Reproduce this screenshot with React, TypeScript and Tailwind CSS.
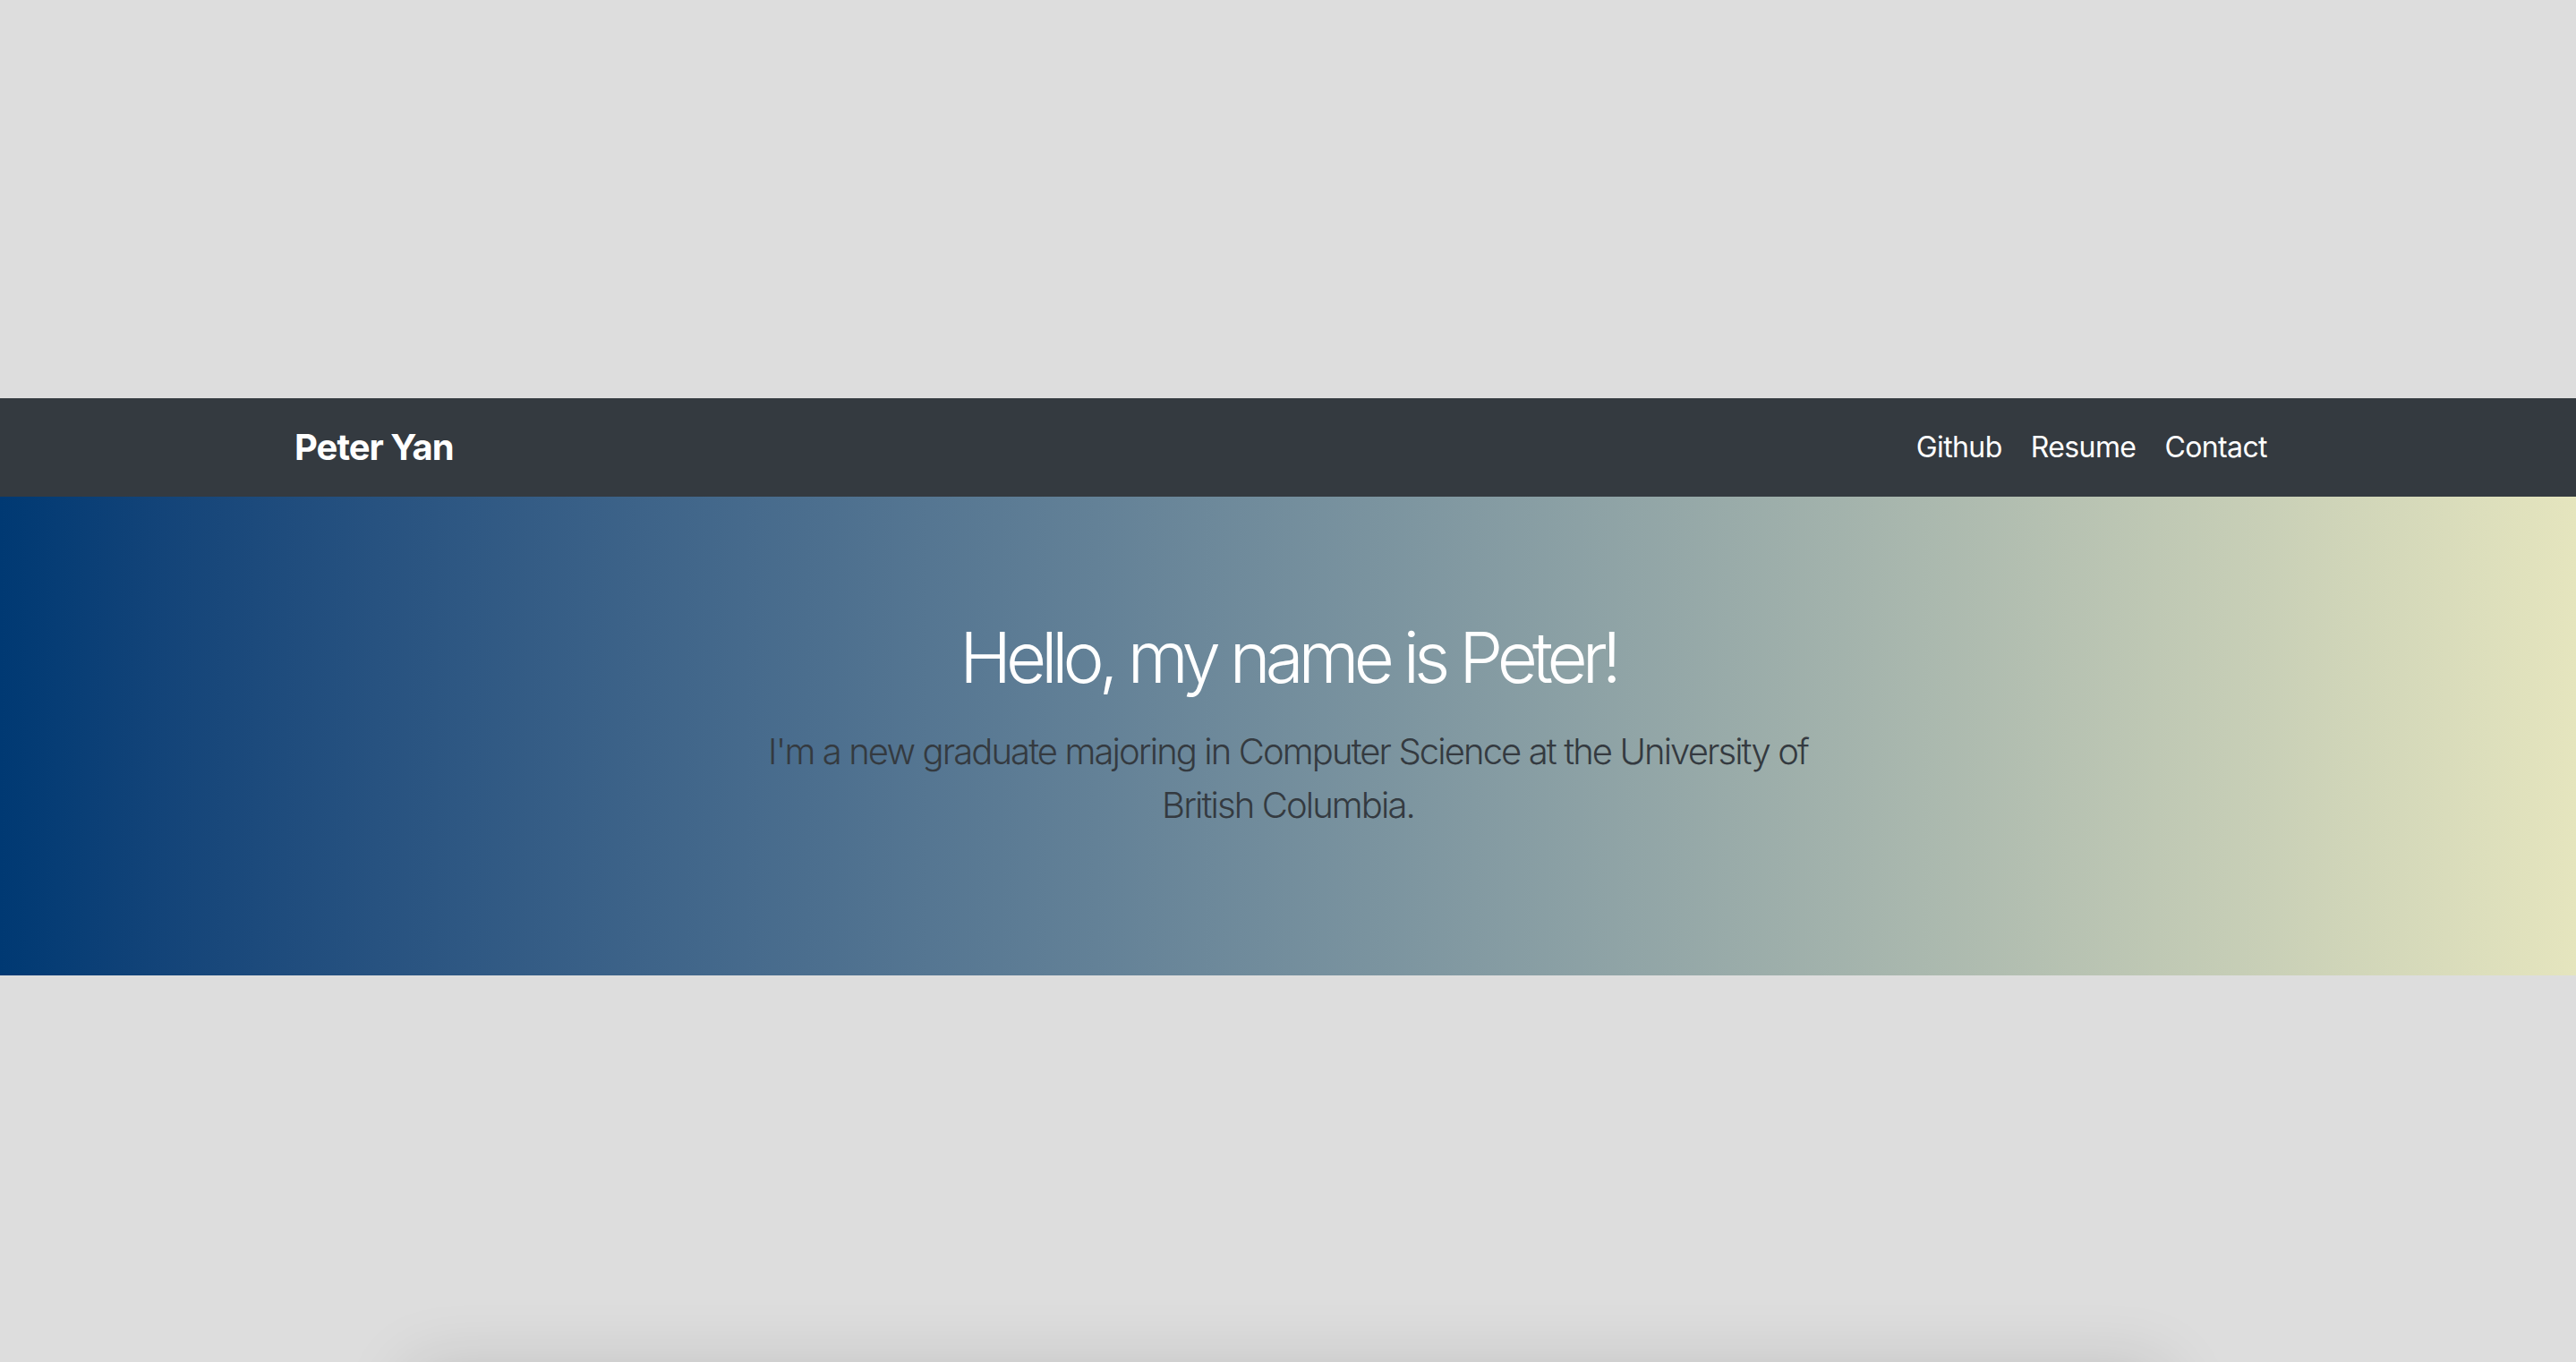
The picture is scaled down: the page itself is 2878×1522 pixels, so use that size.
const links = ["Github", "Resume", "Contact"];

const App = () => {
    return (
        <div className="min-h-screen w-full bg-[#dddddd] font-['Inter','Liberation_Sans',sans-serif] overflow-hidden">
            <div className="h-[445px]" />

            <nav className="h-[110px] bg-[#343a40]">
                <div className="mx-auto flex h-full w-[2220px] items-center justify-between">
                    <a className="text-[40px] font-bold tracking-[-1px] text-white">Peter Yan</a>
                    <ul className="flex items-center">
                        {links.map((l) => (
                            <li key={l}>
                                <a className="block px-4 text-[32px] tracking-[-0.6px] text-white">{l}</a>
                            </li>
                        ))}
                    </ul>
                </div>
            </nav>

            <section className="bg-gradient-to-r from-[#003973] to-[#e5e5be] pt-[132px] pb-[128px]">
                <div className="mx-auto flex max-w-[1240px] flex-col items-center text-center">
                    <h1 className="mb-[27px] text-[78px] leading-[96px] font-light tracking-[-6px] text-white">
                        Hello, my name is Peter!
                    </h1>
                    <p className="mb-[32px] text-[40px] leading-[60px] font-light tracking-[-1.9px] text-[#343a40]">
                        I'm a new graduate majoring in Computer Science at the University of British Columbia.
                    </p>
                </div>
            </section>

            <div className="mx-auto mt-[440px] h-[600px] w-[1960px] rounded-lg bg-[#dddddd] shadow-[0_0_80px_rgba(0,0,0,0.14)]" />
        </div>
    );
};

export default App;
